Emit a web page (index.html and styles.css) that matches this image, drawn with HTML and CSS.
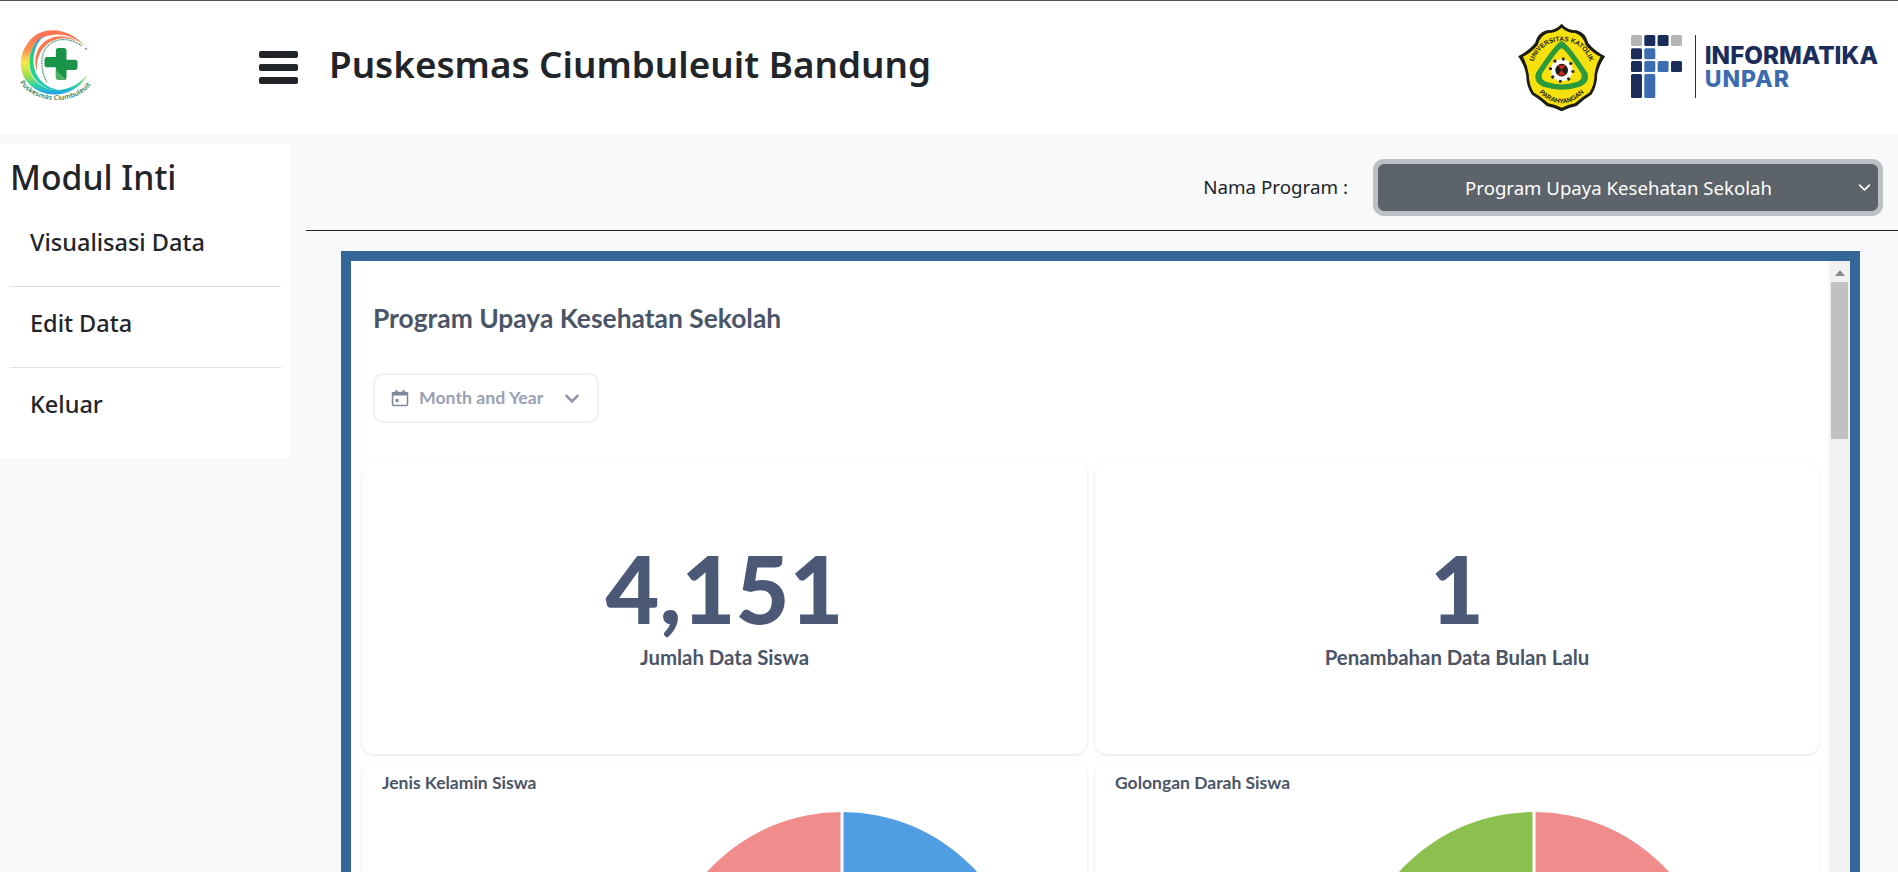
FILE: index.html
```html
<!DOCTYPE html>
<html lang="id">
<head>
    <meta charset="UTF-8">
    <meta name="viewport" content="width=device-width, initial-scale=1.0">
    <title>Puskesmas Ciumbuleuit Bandung</title>
    <link rel="stylesheet" href="styles.css">
</head>
<body>

    <header class="topbar">
        <div class="brand">
            <svg class="logo-puskesmas" viewBox="40 70 260 270" aria-label="Logo Puskesmas">
                <defs>
                    <linearGradient id="swirlOuter" x1="0.6" y1="0" x2="0.6" y2="1">
                        <stop offset="0" stop-color="#ff6f55"/>
                        <stop offset="0.3" stop-color="#fb8f4e"/>
                        <stop offset="0.5" stop-color="#f9e84f"/>
                        <stop offset="0.72" stop-color="#9be04c"/>
                        <stop offset="0.85" stop-color="#2fd6a0"/>
                        <stop offset="1" stop-color="#1f9bf0"/>
                    </linearGradient>
                    <linearGradient id="swirlInner" x1="0.5" y1="0" x2="0.5" y2="1">
                        <stop offset="0" stop-color="#2d8ff0"/>
                        <stop offset="0.45" stop-color="#20d96b"/>
                        <stop offset="1" stop-color="#1fc6c0"/>
                    </linearGradient>
                    <path id="logoTextArc" d="M60 248 C90 300 210 335 278 250"/>
                </defs>
                <path d="M256 142 C222 92 128 66 84 130 C40 190 66 262 140 282 C190 292 240 270 262 226 C226 268 176 280 136 264 C88 244 72 186 104 134 C136 92 214 94 256 142Z" fill="url(#swirlOuter)"/>
                <path d="M132 108 C96 128 78 178 96 222 C112 258 154 278 196 272 C156 274 122 252 108 220 C92 180 104 134 132 108Z" fill="url(#swirlInner)"/>
                <path d="M236 128 C200 100 150 104 122 138 C106 160 102 190 112 214 C108 180 120 150 146 130 C174 110 210 112 236 128Z" fill="#f9764f"/>
                <path d="M244 138 C200 106 150 118 132 156 C122 180 124 220 142 248" fill="none" stroke="#3c8c6a" stroke-width="4" stroke-dasharray="3 2"/>
                <circle cx="258" cy="147" r="3" fill="#e8604c"/>
                <path d="M168 153 a8 8 0 0 1 8 -8 h16 a8 8 0 0 1 8 8 v27 h25 a8 8 0 0 1 8 8 v15 a8 8 0 0 1 -8 8 h-25 v21 a8 8 0 0 1 -8 8 h-16 a8 8 0 0 1 -8 -8 v-29 h-26 a8 8 0 0 1 -8 -8 v-15 a8 8 0 0 1 8 -8 h26Z" fill="#1a9448"/>
                <path d="M168 211 l32 29 a8 8 0 0 1 -8 0 h-16 a8 8 0 0 1 -8 -8Z" fill="#4fb05f"/>
                <text class="logo-caption"><textPath href="#logoTextArc">Puskesmas Ciumbuleuit</textPath></text>
            </svg>
            <button class="menu-toggle" type="button" aria-label="Menu">
                <span></span><span></span><span></span>
            </button>
            <h1 class="site-title">Puskesmas Ciumbuleuit Bandung</h1>
        </div>

        <div class="partners">
            <svg class="logo-unpar" viewBox="114 70 264 268" aria-label="Logo Universitas Katolik Parahyangan">
                <defs>
                    <path id="sealTop" d="M157 212 A88 88 0 0 1 333 212"/>
                    <path id="sealBottom" d="M150 248 Q245 376 340 248"/>
                </defs>
                <path d="M245 72 Q262 92 290 92 Q318 100 325 130 Q345 155 376 170 Q358 195 352 225 Q352 260 335 285 Q310 300 290 320 Q265 325 245 336 Q225 325 200 320 Q180 300 155 285 Q138 260 138 225 Q132 195 114 170 Q145 155 165 130 Q172 100 200 92 Q228 92 245 72Z" fill="#1c1c14"/>
                <path d="M245 84 Q262 100 286 100 Q310 108 317 136 Q338 160 362 172 Q348 196 344 225 Q344 256 329 279 Q306 292 285 312 Q263 316 245 325 Q227 316 205 312 Q184 292 161 279 Q146 256 146 225 Q142 196 128 172 Q152 160 173 136 Q180 108 204 100 Q228 100 245 84Z" fill="#f6e00d"/>
                <text class="seal-text" text-anchor="middle"><textPath href="#sealTop" startOffset="50%">UNIVERSITAS KATOLIK</textPath></text>
                <text class="seal-text" text-anchor="middle"><textPath href="#sealBottom" startOffset="50%">PARAHYANGAN</textPath></text>
                <path d="M245 124 Q262 128 322 220 Q332 248 300 262 Q245 280 190 262 Q158 248 168 220 Q228 128 245 124Z" fill="#2b9a3c"/>
                <path d="M245 146 Q256 148 304 222 Q310 240 290 248 Q245 262 200 248 Q180 240 186 222 Q234 148 245 146Z" fill="#f6e00d"/>
                <circle cx="245" cy="212" r="33" fill="#ffffff"/>
                <circle cx="245" cy="212" r="34" fill="none" stroke="#2a2a22" stroke-width="9" stroke-dasharray="8 18.700"/>
                <circle cx="245" cy="212" r="19" fill="#1c1c14"/>
                <path d="M245 212 L233 197 H257Z M245 212 L233 227 H257Z" fill="#c8281e"/>
            </svg>

            <div class="logo-if">
                <svg class="logo-if-mark" viewBox="0 0 51 63" aria-hidden="true">
                    <rect class="if-gray" x="0" y="0" width="11" height="11" rx="1.5"/>
                    <rect class="if-navy" x="13.3" y="0" width="11" height="11" rx="1.5"/>
                    <rect class="if-navy" x="26.6" y="0" width="11" height="11" rx="1.5"/>
                    <rect class="if-gray" x="40" y="0" width="11" height="11" rx="1.5"/>
                    <rect class="if-navy" x="0" y="13.3" width="11" height="11" rx="1.5"/>
                    <rect class="if-blue" x="13.3" y="13.3" width="11" height="11" rx="1.5"/>
                    <rect class="if-navy" x="0" y="26" width="11" height="11" rx="1.5"/>
                    <rect class="if-blue" x="13.3" y="26" width="11" height="11" rx="1.5"/>
                    <rect class="if-blue" x="26.6" y="26" width="11" height="11" rx="1.5"/>
                    <rect class="if-navy" x="40" y="26" width="11" height="11" rx="1.5"/>
                    <rect class="if-navy" x="0" y="39" width="11" height="24" rx="1.5"/>
                    <rect class="if-blue" x="13.3" y="39" width="11" height="24" rx="1.5"/>
                </svg>
                <div class="logo-if-text">
                    <span class="if-line1">INFORMATIKA</span>
                    <span class="if-line2">UNPAR</span>
                </div>
            </div>
        </div>
    </header>

    <div class="layout">
        <aside class="sidebar">
            <h2>Modul Inti</h2>
            <nav class="side-nav">
                <a href="#">Visualisasi Data</a>
                <a href="#">Edit Data</a>
                <a href="#">Keluar</a>
            </nav>
        </aside>

        <main class="content">
            <div class="program-bar">
                <label for="program">Nama Program :</label>
                <div class="select-wrap">
                    <select id="program">
                        <option>Program Upaya Kesehatan Sekolah</option>
                    </select>
                    <svg class="select-arrow" viewBox="0 0 16 16" aria-hidden="true">
                        <path d="M2 5l6 6 6-6" fill="none" stroke="#fff" stroke-width="2" stroke-linecap="round" stroke-linejoin="round"/>
                    </svg>
                </div>
            </div>
            <hr class="divider">

            <div class="frame">
                <div class="dashboard">
                    <h3 class="dash-title">Program Upaya Kesehatan Sekolah</h3>
                    <button class="date-filter" type="button">
                        <svg viewBox="0 0 18 18" aria-hidden="true">
                            <path d="M2.5 3.5h13a1 1 0 0 1 1 1v11a1 1 0 0 1-1 1h-13a1 1 0 0 1-1-1v-11a1 1 0 0 1 1-1Z" fill="none" stroke="#7f869c" stroke-width="1.5"/>
                            <path d="M1.5 3.5h15v3h-15Z" fill="#7f869c"/>
                            <path d="M4.5 1h2v3h-2Z M11.5 1h2v3h-2Z" fill="#7f869c"/>
                            <rect x="4.5" y="10" width="3" height="3" fill="#7f869c"/>
                        </svg>
                        <span>Month and Year</span>
                        <svg class="date-chevron" viewBox="0 0 16 16" aria-hidden="true">
                            <path d="M2.5 5.5L8 11l5.500-5.500" fill="none" stroke="#8c93a8" stroke-width="2.200"/>
                        </svg>
                    </button>

                    <div class="card-grid">
                        <section class="card stat">
                            <div class="stat-value">4,151</div>
                            <div class="stat-label">Jumlah Data Siswa</div>
                        </section>
                        <section class="card stat">
                            <div class="stat-value">1</div>
                            <div class="stat-label">Penambahan Data Bulan Lalu</div>
                        </section>
                        <section class="card chart chart-gender">
                            <h4>Jenis Kelamin Siswa</h4>
                            <svg class="pie" viewBox="0 0 370 370" aria-hidden="true">
                                <path d="M185 185V3A182 182 0 0 0 185 367Z" fill="#f08c8c"/>
                                <path d="M185 185V3A182 182 0 0 1 185 367Z" fill="#4f9de3"/>
                                <path d="M185 0V370" stroke="#fff" stroke-width="3"/>
                            </svg>
                        </section>
                        <section class="card chart chart-blood">
                            <h4>Golongan Darah Siswa</h4>
                            <svg class="pie" viewBox="0 0 370 370" aria-hidden="true">
                                <path d="M185 185V3A182 182 0 0 0 185 367Z" fill="#8bc04f"/>
                                <path d="M185 185V3A182 182 0 0 1 185 367Z" fill="#f08c8c"/>
                                <path d="M185 0V370" stroke="#fff" stroke-width="3"/>
                            </svg>
                        </section>
                    </div>
                </div>

                <div class="scrollbar">
                    <span class="scroll-up"></span>
                    <span class="scroll-thumb"></span>
                </div>
            </div>
        </main>
    </div>

</body>
</html>
```

FILE: styles.css
```css
* {
    box-sizing: border-box;
}

html, body {
    height: 100%;
}

body {
    margin: 0;
    font-family: 'Noto Sans', 'Open Sans', sans-serif;
    background-color: #f8f9fa;
    color: #212529;
    overflow: hidden;
}

/* header */
.topbar {
    height: 134px;
    background-color: #fff;
    border-top: 1px solid #555;
    display: flex;
    justify-content: space-between;
}

.brand {
    display: flex;
    align-items: center;
}

.logo-puskesmas {
    width: 87px;
    height: 90px;
    margin: 0 0 0 13px;
    flex: none;
}

.logo-caption {
    font-family: 'Noto Sans', sans-serif;
    font-size: 20px;
    font-weight: 600;
    letter-spacing: 0.5px;
    fill: #2e7d5b;
}

.menu-toggle {
    width: 39px;
    height: 33px;
    margin: 0 0 0 159px;
    padding: 0;
    border: none;
    background: none;
    display: flex;
    flex-direction: column;
    justify-content: space-between;
}

.menu-toggle span {
    display: block;
    height: 7px;
    border-radius: 2px;
    background-color: #212529;
}

.site-title {
    margin: 0 0 8px 31px;
    font-size: 36.800px;
    font-weight: 600;
    color: #212529;
    white-space: nowrap;
}

.partners {
    display: flex;
    align-items: flex-start;
    padding: 22px 20px 0 0;
}

.logo-unpar {
    width: 88px;
    height: 89px;
    flex: none;
}

.logo-if {
    display: flex;
    margin: 12px 0 0 25px;
}

.logo-if-mark {
    width: 51px;
    height: 63px;
}

.if-gray { fill: #b5b5b5; }
.if-navy { fill: #1b2d5b; }
.if-blue { fill: #3b6cb0; }

.logo-if-text {
    margin-left: 13px;
    padding-left: 9px;
    border-left: 1px solid #1b2d5b;
    display: flex;
    flex-direction: column;
    font-family: 'Inter', sans-serif;
    font-weight: 800;
    line-height: 1;
}

.if-line1 {
    margin-top: 9px;
    font-size: 24.200px;
    color: #1b2d5b;
}

.if-line2 {
    margin-top: 0;
    font-size: 23px;
    letter-spacing: 1px;
    color: #3b6cb0;
}

.seal-text {
    font-family: 'Liberation Sans', sans-serif;
    font-size: 20px;
    font-weight: 700;
    fill: #1c1c14;
}

/* sidebar + content */
.layout {
    display: flex;
    height: calc(100% - 134px);
}

.sidebar {
    width: 291px;
    height: 314px;
    margin-top: 10px;
    padding: 12px 10px 0 10px;
    background-color: #fff;
    flex: none;
}

.sidebar h2 {
    margin: 0 0 8px;
    font-size: 33.700px;
    font-weight: 500;
    line-height: 42px;
}

.side-nav a {
    display: block;
    height: 81px;
    padding: 20px 0 0 20px;
    font-size: 23.500px;
    font-weight: 500;
    color: #212529;
    text-decoration: none;
    border-bottom: 1px solid #dee2e6;
}

.side-nav a:last-child {
    border-bottom: none;
}

.content {
    flex: 1;
    min-width: 0;
    padding-left: 15px;
}

.program-bar {
    display: flex;
    justify-content: flex-end;
    align-items: center;
    height: 96px;
    padding: 10px 20px 0 0;
}

.program-bar label {
    font-size: 18.800px;
    margin-right: 30px;
}

.select-wrap {
    position: relative;
    width: 500px;
}

.select-wrap select {
    width: 100%;
    height: 47px;
    padding: 0 19px 0 0;
    appearance: none;
    border: 1px solid #5c636a;
    border-radius: 6px;
    background-color: #5c636a;
    color: #fff;
    font-family: inherit;
    font-size: 18.600px;
    text-align: center;
    box-shadow: 0 0 0 5px rgba(130, 138, 145, 0.5);
    outline: none;
}

.select-arrow {
    position: absolute;
    top: 17px;
    right: 7px;
    width: 13px;
    height: 13px;
}

.divider {
    margin: 0;
    border: none;
    border-top: 1px solid #212529;
}

.frame {
    display: flex;
    width: 1519px;
    height: 800px;
    margin: 20px 0 0 35px;
    border: 10px solid #336699;
    background-color: #fff;
}

.dashboard {
    flex: 1;
    min-width: 0;
    padding: 0 11px;
    font-family: 'Lato', sans-serif;
    color: #4a5568;
}

.dash-title {
    margin: 0;
    padding: 41px 0 0 11px;
    font-size: 26.400px;
    font-weight: 700;
    line-height: 32px;
}

.date-filter {
    display: flex;
    align-items: center;
    width: 226px;
    height: 50px;
    margin: 39px 0 39px 11px;
    padding: 0 16px 1px 16px;
    background: #fff;
    border: 2px solid #edf2f7;
    border-radius: 10px;
    font-family: inherit;
    font-size: 17.700px;
    font-weight: 700;
    color: #9aa1b5;
}

.date-filter svg {
    width: 18px;
    height: 18px;
    flex: none;
}

.date-filter span {
    margin-left: 10px;
}

.date-filter .date-chevron {
    margin-left: auto;
}

.card-grid {
    display: grid;
    grid-template-columns: 725px 724px;
    grid-auto-rows: min-content;
    gap: 8px;
}

.card {
    background-color: #fff;
    border-radius: 12px;
    box-shadow: 0 1px 3px rgba(0, 0, 0, 0.12);
}

.stat {
    height: 292px;
    padding-bottom: 6px;
    display: flex;
    flex-direction: column;
    align-items: center;
    justify-content: center;
}

.stat-value {
    font-size: 93px;
    font-weight: 900;
    line-height: 1;
    color: #4b5876;
}

.stat-label {
    margin-top: 10px;
    font-size: 20.400px;
    font-weight: 700;
}

.chart {
    height: 420px;
    padding: 9px 20px;
}

.chart h4 {
    margin: 0;
    font-size: 17.500px;
    font-weight: 700;
    line-height: 24px;
}

.pie {
    display: block;
    width: 370px;
    height: 370px;
    margin-top: 14px;
}

.chart-gender .pie {
    margin-left: 275px;
}

.chart-blood .pie {
    margin-left: 234px;
}

/* the iframe scrollbar in the original */
.scrollbar {
    width: 21px;
    background-color: #f1f1f1;
    flex: none;
    display: flex;
    flex-direction: column;
    align-items: center;
}

.scroll-up {
    width: 0;
    height: 0;
    margin: 9px 0 6px;
    border-left: 5px solid transparent;
    border-right: 5px solid transparent;
    border-bottom: 6px solid #8a8a8a;
}

.scroll-thumb {
    width: 17px;
    height: 157px;
    background-color: #c1c1c1;
}
```
